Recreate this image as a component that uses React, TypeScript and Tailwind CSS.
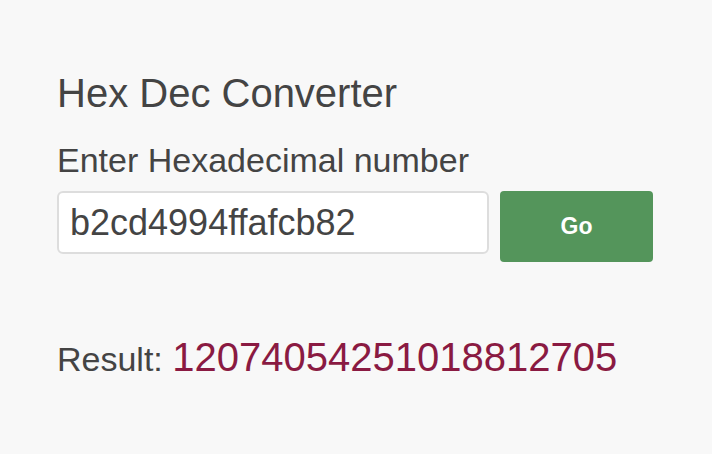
import { useState } from 'react';

export default function App() {
  const [hex, setHex] = useState('b2cd4994ffafcb82');
  const [result, setResult] = useState('12074054251018812705');

  const convert = () => {
    try {
      setResult(BigInt('0x' + hex.trim()).toString());
    } catch {
      setResult('Invalid input');
    }
  };

  return (
    <div className="min-h-screen w-full bg-[#f8f8f8] pl-[57px] pt-[69px] text-[#444444] font-['Liberation_Sans',Arial,sans-serif]">
      <h1 className="text-[40px] leading-[48px] font-normal">Hex Dec Converter</h1>
      <label htmlFor="hex" className="block mt-[23px] text-[34px] leading-[40px]">
        Enter Hexadecimal number
      </label>
      <div className="flex items-start gap-[11px] mt-[11px]">
        <input
          id="hex"
          value={hex}
          onChange={(e) => setHex(e.target.value)}
          className="w-[432px] h-[63px] bg-white border-2 border-[#dddddd] rounded-[6px] pl-[11px] text-[36px] text-[#444444] outline-none"
        />
        <button
          onClick={convert}
          className="w-[153px] h-[71px] bg-[#54955b] rounded-[4px] text-white font-bold text-[23px]"
        >
          Go
        </button>
      </div>
      <div className="mt-[71px] text-[40px] leading-[48px]">
        <span className="text-[34px]">Result: </span>
        <span className="text-[#8a1a42]">{result}</span>
      </div>
    </div>
  );
}
